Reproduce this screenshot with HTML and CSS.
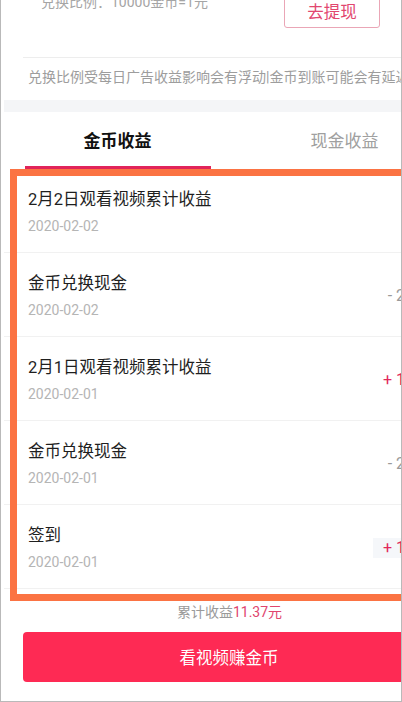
FILE: index.html
```html
<!DOCTYPE html>
<html lang="zh-CN">
<head>
<meta charset="utf-8">
<title>金币收益</title>
<link rel="stylesheet" href="styles.css">
</head>
<body>
<div class="frame">
  <div class="page">
    <div class="top-row">
      <span class="ratio">兑换比例：10000金币=1元</span>
      <span class="withdraw">去提现</span>
    </div>
    <div class="notice">兑换比例受每日广告收益影响会有浮动|金币到账可能会有延迟，请耐心等待</div>
    <div class="band"></div>
    <div class="tabs">
      <div class="tab active"><span class="tab-label">金币收益</span><span class="tab-bar"></span></div>
      <div class="tab"><span class="tab-label">现金收益</span></div>
    </div>
    <div class="list">
      <div class="row">
        <div class="info"><div class="title">2月2日观看视频累计收益</div><div class="date">2020-02-02</div></div>
        <div class="amount plus">+ 52</div>
      </div>
      <div class="row">
        <div class="info"><div class="title">金币兑换现金</div><div class="date">2020-02-02</div></div>
        <div class="amount minus">- 2000</div>
      </div>
      <div class="row">
        <div class="info"><div class="title">2月1日观看视频累计收益</div><div class="date">2020-02-01</div></div>
        <div class="amount plus">+ 1000</div>
      </div>
      <div class="row">
        <div class="info"><div class="title">金币兑换现金</div><div class="date">2020-02-01</div></div>
        <div class="amount minus">- 2000</div>
      </div>
      <div class="row">
        <div class="info"><div class="title">签到</div><div class="date">2020-02-01</div></div>
        <div class="amount plus hl">+ 1000</div>
      </div>
    </div>
    <div class="summary">累计收益<span class="sum-value">11.37元</span></div>
    <div class="cta">看视频赚金币</div>
  </div>
  <div class="annot"></div>
</div>
</body>
</html>
```
FILE: styles.css
```css
html, body {
  margin: 0;
  padding: 0;
  background: #ffffff;
  overflow: hidden;
}

body {
  font-family: "Roboto", "Noto Sans CJK SC", "Noto Sans", sans-serif;
  color: #333333;
}

.frame {
  position: relative;
  width: 402px;
  height: 702px;
  box-sizing: border-box;
  border-left: 1px solid #b9b9b9;
  border-right: 1px solid #b9b9b9;
  border-bottom: 1px solid #b9b9b9;
  overflow: hidden;
  background: #ffffff;
}

.page {
  width: 457px;
  display: flex;
  flex-direction: column;
}

.top-row {
  margin-top: -8px;
  margin-left: 22px;
  height: 66px;
  box-sizing: border-box;
  padding: 0 78px 0 18px;
  border-bottom: 1px solid #ededed;
  display: flex;
  justify-content: space-between;
  align-items: flex-start;
}

.ratio {
  font-size: 14px;
  line-height: 20px;
  color: #a5a5a5;
}

.withdraw {
  margin-top: 2px;
  width: 96px;
  height: 34px;
  box-sizing: border-box;
  border: 1px solid #eaa6b6;
  border-radius: 3px;
  display: flex;
  align-items: center;
  justify-content: center;
  font-size: 16.5px;
  color: #e2476f;
}

.notice {
  padding: 9px 0 13px 27px;
  font-size: 14px;
  line-height: 20px;
  color: #9d9d9d;
  white-space: nowrap;
}

.band {
  margin-left: 3px;
  height: 12px;
  background: #f4f5f7;
}

.tabs {
  margin-left: 3px;
  height: 57px;
  display: grid;
  grid-template-columns: 1fr 1fr;
}

.tab {
  display: flex;
  flex-direction: column;
  align-items: center;
  padding-top: 17px;
  box-sizing: border-box;
}

.tab-label {
  font-size: 17px;
  line-height: 24px;
  color: #a0a0a0;
}

.tab.active .tab-label {
  color: #111111;
  font-weight: 700;
}

.tab-bar {
  margin-top: auto;
  width: 186px;
  height: 3px;
  background: #e1245a;
}

.list {
  margin-left: 3px;
  display: flex;
  flex-direction: column;
}

.row {
  height: 84px;
  box-sizing: border-box;
  padding: 19px 26px 16px 24px;
  border-bottom: 1px solid #f1f1f1;
  display: flex;
  justify-content: space-between;
  align-items: center;
}

.info {
  display: flex;
  flex-direction: column;
  gap: 4px;
  align-self: stretch;
}

.title {
  font-size: 16.5px;
  line-height: 24px;
  color: #1f1f1f;
}

.date {
  font-size: 14px;
  line-height: 20px;
  color: #b5b5b5;
}

.amount {
  font-size: 16px;
  line-height: 20px;
  white-space: nowrap;
}

.amount.plus {
  color: #e2285c;
}

.amount.minus {
  color: #9a9a9a;
}

.amount.hl {
  background: #f5f7fa;
  padding: 0 10px;
  margin-right: -10px;
}

.summary {
  padding-top: 13px;
  text-align: center;
  font-size: 14px;
  line-height: 20px;
  color: #9a9a9a;
}

.sum-value {
  color: #e0456e;
}

.cta {
  margin: 10px 0 0 22px;
  width: 412px;
  height: 50px;
  border-radius: 4px;
  background: #fe2a54;
  color: #ffffff;
  font-size: 16.5px;
  display: flex;
  align-items: center;
  justify-content: center;
}

.annot {
  position: absolute;
  left: 9px;
  top: 169px;
  width: 600px;
  height: 432px;
  box-sizing: border-box;
  border: 7px solid #fb7343;
  pointer-events: none;
}
```
